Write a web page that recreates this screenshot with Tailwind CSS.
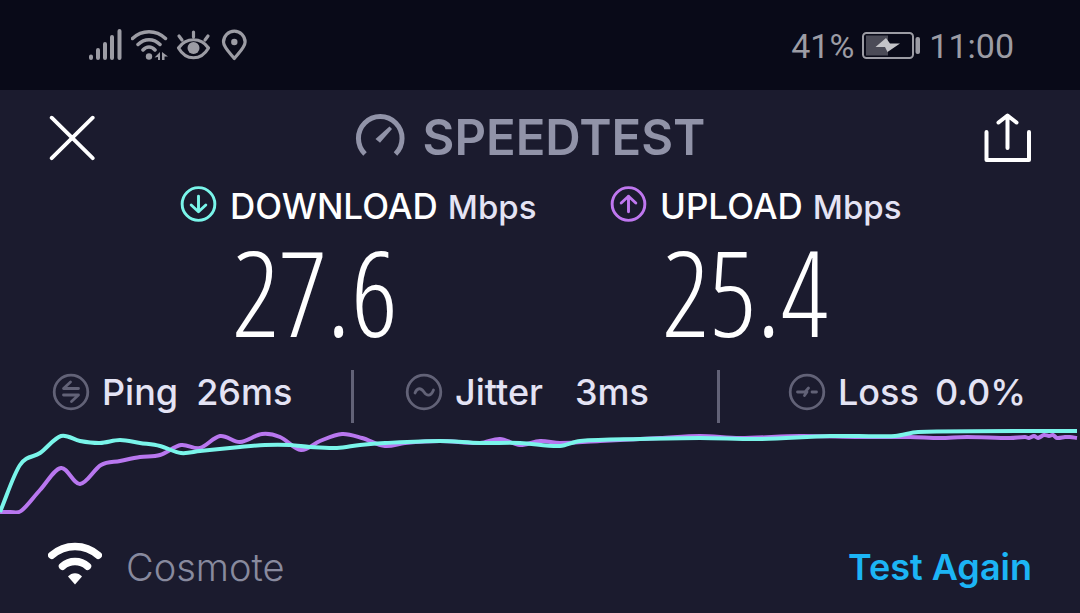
<!DOCTYPE html>
<html lang="en">
<head>
<meta charset="utf-8">
<meta name="viewport" content="width=device-width, initial-scale=1">
<title>Speedtest</title>
<script src="https://cdn.jsdelivr.net/npm/@tailwindcss/browser@4"></script>
</head>
<body class="flex min-h-screen flex-col bg-[#1b1b2e] font-['Inter','Liberation_Sans',sans-serif] text-white">

<div class="flex h-[90px] shrink-0 items-center justify-between bg-[#090a18] pr-[66px] pl-[88px] text-[#9c9ca4]">
  <div class="flex items-center">
    <svg class="mr-[9px] h-8 w-[34px]" viewBox="88 29 34 32" fill="none" stroke="currentColor" stroke-width="4" stroke-linecap="round"><path d="M91 56.500V58M98 50V58M105 44V58M112 37V58M119.500 31V58"/></svg>
    <svg class="mr-2 h-8 w-[37px]" viewBox="131 29 37 32" fill="none" stroke="currentColor" stroke-width="3.500" stroke-linecap="round"><path d="M132.500 38.500C142 29.500 156 29.500 165.500 38.500M138 44.500C144.500 38 153.500 38 160 44.500M143 50C146.500 46 151.500 46 155 50"/><circle cx="149" cy="56.500" r="3.200" fill="currentColor" stroke="none"/><path d="M160 52V60H158V57L154.500 57.500ZM162 60V52L168 56.500L164.500 56.500V60Z" fill="currentColor" stroke="none"/></svg>
    <svg class="mr-[10px] h-8 w-[35px]" viewBox="176 29 35 32" fill="none" stroke="currentColor" stroke-width="3.200" stroke-linecap="round" stroke-linejoin="round"><path d="M178.500 48C186 37 201 37 208.500 48C201 61 186 61 178.500 48ZM193.500 32V37M179 36L182 40M208 36L205 40"/><circle cx="193.500" cy="48" r="6" fill="currentColor" stroke="none"/></svg>
    <svg class="h-8 w-[26px]" viewBox="221 29 26 32" fill="none" stroke="currentColor" stroke-width="3.200" stroke-linejoin="round"><path d="M234.300 58.500C229 52 223.500 47 223.500 42A10.800 10.800 0 0 1 245.100 42C245.100 47 239.600 52 234.300 58.500Z"/><circle cx="234.300" cy="42" r="3.200" fill="currentColor" stroke="none"/></svg>
  </div>
  <div class="flex items-center pt-[2px] font-['Roboto',sans-serif] text-[34px] leading-9">
    <span class="mr-2">41%</span>
    <svg class="mr-2 h-7 w-[59px]" viewBox="862 32 59 28"><rect x="863" y="33" width="50" height="25" rx="3.500" fill="none" stroke="currentColor" stroke-width="2"/><rect x="866" y="35.500" width="22" height="20" fill="#4b4b57"/><path d="M886 38L890 43.500H900L887.500 52L885 47H875.500Z" fill="#c4c4c8"/><rect x="915.500" y="37" width="4.500" height="17" rx="2" fill="currentColor"/></svg>
    <span>11:00</span>
  </div>
</div>

<header class="flex h-24 shrink-0 items-center justify-between px-[49px]">
  <button type="button" aria-label="Close" class="w-[47px]"><svg class="h-[46px] w-[46px]" viewBox="49 115 46 46" fill="none" stroke="#fff" stroke-width="3.800" stroke-linecap="round"><path d="M51.700 117.700L92.700 158.200M92.700 117.700L51.700 158.200"/></svg></button>
  <h1 class="mr-5 flex items-center gap-[18px] text-[49px] leading-[56px] font-semibold text-[#9193a8]">
    <svg class="h-[48px] w-[50px]" viewBox="354 114 50 48" fill="none" stroke="currentColor" stroke-width="5"><path d="M364 154A21.800 21.800 0 1 1 394.500 154"/><path d="M374.500 139L388.500 126.500L391 129L379 142.800Z" fill="currentColor" stroke="none"/></svg>
    SPEEDTEST
  </h1>
  <button type="button" aria-label="Share" class="w-[47px]"><svg class="h-[50px] w-[47px]" viewBox="984 113 47 50" fill="none" stroke="#fff" stroke-width="4" stroke-linecap="round" stroke-linejoin="round"><path d="M986.500 132V160H1029V132M1007.500 148V116M998.500 122.500L1007.500 115.500L1016.500 122.500"/></svg></button>
</header>

<main class="flex shrink-0 flex-col">
  <section class="grid grid-cols-[430fr_470fr] pl-[180px]">
    <div>
      <h2 class="flex h-9 items-center gap-[13px]">
        <svg class="h-[38px] w-[37px]" viewBox="0 0 38 38" fill="none" stroke="#7af5ea" stroke-width="3" stroke-linecap="round" stroke-linejoin="round"><circle cx="19" cy="19" r="16.800"/><path d="M19 11V27M11.500 20L19 27L26.500 20"/></svg>
        <span class="flex items-baseline gap-[10px] pt-1 text-[35px] leading-9 font-medium">DOWNLOAD <span class="text-[33px] text-[#e4e3f4]">Mbps</span></span>
      </h2>
      <p class="pb-2 pl-[52px] font-['Open_Sans_Condensed_Light','Roboto_Condensed','Roboto',sans-serif] text-[118px] leading-[140px] font-light">27.6</p>
    </div>
    <div>
      <h2 class="flex h-9 items-center gap-[13px]">
        <svg class="h-[38px] w-[37px]" viewBox="0 0 38 38" fill="none" stroke="#bf77ef" stroke-width="3" stroke-linecap="round" stroke-linejoin="round"><circle cx="19" cy="19" r="16.800"/><path d="M19 27V11M11.500 18L19 11L26.500 18"/></svg>
        <span class="flex items-baseline gap-[10px] pt-1 text-[35px] leading-9 font-medium">UPLOAD <span class="text-[33px] text-[#e4e3f4]">Mbps</span></span>
      </h2>
      <p class="pb-2 pl-[52px] font-['Open_Sans_Condensed_Light','Roboto_Condensed','Roboto',sans-serif] text-[118px] leading-[140px] font-light">25.4</p>
    </div>
  </section>

  <section class="grid h-[53px] grid-cols-[354fr_366fr_360fr] text-[36px] leading-[44px] font-medium text-[#e4e3f4]">
    <div class="flex items-start border-r-[3px] border-[#626277] pl-[52px]">
      <svg class="mr-3 h-11 w-[38px] text-[#626277]" viewBox="0 0 38 38" fill="none" stroke="currentColor" stroke-width="2.800" stroke-linecap="round" stroke-linejoin="round"><circle cx="19" cy="19" r="16.800"/><path d="M26.500 15.500H11.500L18.500 9M11.500 22H26.500L19.500 28.500"/></svg>
      <span class="mr-[18px]">Ping</span><span>26ms</span>
    </div>
    <div class="flex items-start border-r-[3px] border-[#626277] pl-[51px]">
      <svg class="mr-3 h-11 w-[38px] text-[#626277]" viewBox="0 0 38 38" fill="none" stroke="currentColor" stroke-width="2.800" stroke-linecap="round"><circle cx="19" cy="19" r="16.800"/><path d="M10 20C12 14.500 16 14.500 19 19S26 23.500 28.500 17"/></svg>
      <span class="mr-8">Jitter</span><span>3ms</span>
    </div>
    <div class="flex items-start pl-[68px]">
      <svg class="mr-3 h-11 w-[38px] text-[#626277]" viewBox="0 0 38 38" fill="none" stroke="currentColor" stroke-width="2.800" stroke-linecap="round" stroke-linejoin="round"><circle cx="19" cy="19" r="16.800"/><path d="M9.500 19H17L20.500 15M16.500 22.500L19 19M24 19H28.500"/></svg>
      <span class="mr-4">Loss</span><span>0.0%</span>
    </div>
  </section>

  <svg class="block h-[91px] w-full" viewBox="0 423 1080 91" preserveAspectRatio="none" fill="none" stroke-width="4" stroke-linejoin="round" aria-label="Download and upload speed over time">
    <path id="upload" stroke="#b877ef"/>
    <path id="download" stroke="#7af5ea"/>
  </svg>
</main>

<footer class="flex grow items-center justify-between px-12 pt-[7px] text-[36px] leading-[44px]">
  <div class="flex items-center gap-6 font-light text-[#888a9e]">
    <svg class="h-[52px] w-[54px]" viewBox="48 541 54 52" fill="none" stroke="#fff" stroke-width="7.500" stroke-linecap="round"><path d="M51.800 555.300C65 543.500 85 543.500 98.200 555.300M62.500 566.200C69.500 560 80.500 560 87.500 566.200"/><path d="M68 576.500C71.500 572 78.500 572 82 576.500L75 584.500Z" fill="#fff" stroke="none"/></svg>
    <span class="text-[38px]">Cosmote</span>
  </div>
  <button type="button" class="font-semibold text-[#1cb5f5]">Test Again</button>
</footer>

<script>
  const series = {
    upload: [[0,512],[10,512],[21,511],[40,490],[61,468],[80,484],[101,465],[120,461],[140,457],[160,455],[181,445],[200,448],[220,436],[240,442],[262,434],[280,437],[301,450],[320,441],[342,434],[362,438],[385,446],[405,443],[440,441],[480,443],[500,439],[520,445],[540,441],[560,443],[600,441],[660,438],[700,436],[740,438],[800,436],[860,437],[910,437],[940,438],[967,437],[1010,438],[1025,437],[1029,438],[1034,436],[1038,438],[1044,435],[1049,436],[1053,435],[1057,438],[1065,437],[1070,437],[1077,438]],
    download: [[0,512],[20,465],[40,453],[61,436],[80,441],[100,443],[120,440],[140,443],[160,446],[181,453],[200,451],[240,447],[265,445],[290,445],[310,447],[337,448],[360,445],[385,443],[440,441],[480,443],[520,443],[560,446],[580,441],[640,439],[700,438],[760,439],[830,436],[895,436],[918,432],[1077,431]]
  };
  // Each segment's control points follow the slope between the neighbouring samples.
  for (const [id, p] of Object.entries(series)) {
    const slope = p.map((q, i) => {
      const a = p[Math.max(i - 1, 0)], b = p[Math.min(i + 1, p.length - 1)];
      return (b[1] - a[1]) / (b[0] - a[0]);
    });
    let d = `M${p[0]}`;
    for (let i = 1; i < p.length; i++) {
      const h = (p[i][0] - p[i - 1][0]) / 3;
      d += `C${p[i - 1][0] + h},${p[i - 1][1] + slope[i - 1] * h} ${p[i][0] - h},${p[i][1] - slope[i] * h} ${p[i]}`;
    }
    document.getElementById(id).setAttribute('d', d);
  }
</script>
</body>
</html>
